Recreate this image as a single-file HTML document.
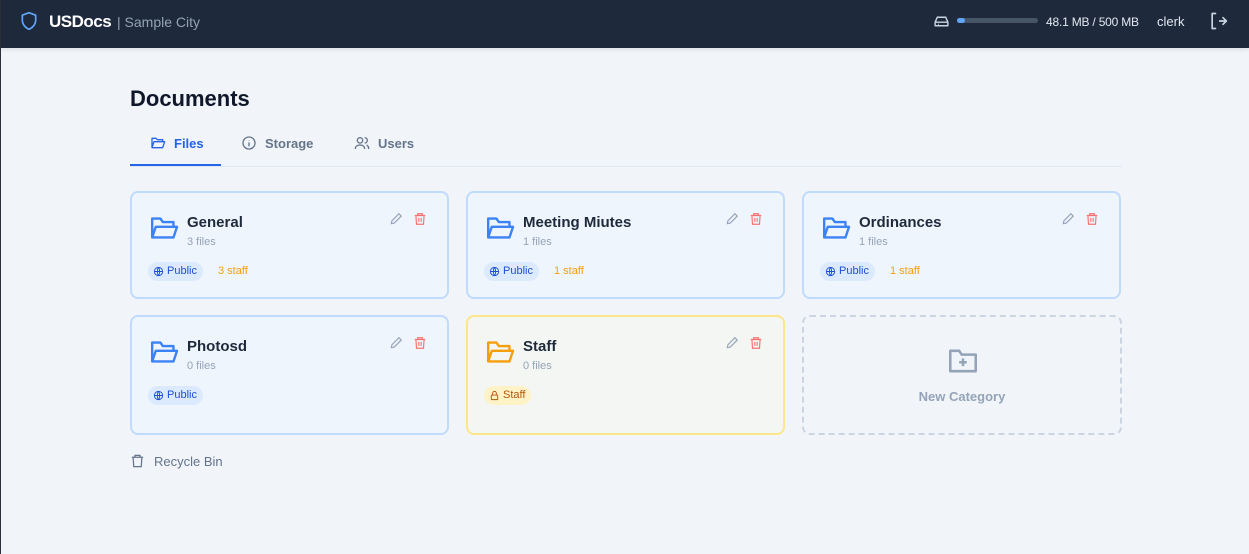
<!DOCTYPE html>
<html><head><meta charset="utf-8"><style>
*{box-sizing:border-box;margin:0;padding:0}
body{width:1249px;height:554px;background:#f1f5f9;font-family:"Liberation Sans",sans-serif;position:relative;overflow:hidden}
.hdr{position:absolute;left:0;top:0;width:1249px;height:48px;background:#1e293b;box-shadow:0 2px 4px rgba(0,0,0,.08)}
.a{position:absolute}
.card{position:absolute;width:319px;border:2px solid #bfdbfe;border-radius:8px;background:#eff5fc}
.card .t{position:absolute;left:55px;top:21px;font-size:15px;font-weight:bold;color:#1e293b}
.card .n{position:absolute;left:55px;top:43px;font-size:11px;color:#94a3b8}
.card .fi{position:absolute;left:17px;top:22px}
.card .ed{position:absolute;left:257px;top:19px}
.card .de{position:absolute;left:281px;top:19px}
.pub{position:absolute;left:16px;top:69px;height:19px;padding:0 6px 0 5px;border-radius:10px;background:#dbeafe;color:#1d4ed8;font-size:11px;line-height:19px;display:flex;align-items:center;gap:3px}
.st{position:absolute;left:86px;top:72px;font-size:11px;color:#f59e0b}
</style></head><body>
<div class="a" style="left:0;top:0;width:1px;height:554px;background:#2a2f3a;z-index:5"></div>
<div class="hdr">
<svg class="a" style="left:19px;top:10px" width="20" height="22" viewBox="0 0 24 24" fill="none" stroke="#60a5fa" stroke-width="2" stroke-linejoin="round"><path d="M12 2l8 3v6c0 5-3.5 9-8 11-4.5-2-8-6-8-11V5z"/></svg>
<div class="a" style="left:49px;top:12px;font-size:17px;font-weight:bold;color:#fff;letter-spacing:-.5px">USDocs</div>
<div class="a" style="left:117px;top:14px;font-size:14px;color:#94a3b8">| Sample City</div>
<svg class="a" style="left:933px;top:13px" width="17" height="17" viewBox="0 0 24 24" fill="none" stroke="#cbd5e1" stroke-width="2" stroke-linejoin="round"><path d="M3 13l3-7h12l3 7v5H3z M3 13h18"/><path d="M7 16h1"/></svg>
<div class="a" style="left:957px;top:18px;width:81px;height:5px;border-radius:3px;background:#475569"><div style="width:8px;height:5px;border-radius:3px;background:#60a5fa"></div></div>
<div class="a" style="left:1046px;top:15px;font-size:12px;color:#e2e8f0;letter-spacing:-.2px">48.1 MB / 500 MB</div>
<div class="a" style="left:1157px;top:14px;font-size:13px;color:#e2e8f0">clerk</div>
<svg class="a" style="left:1208px;top:11px" width="20" height="20" viewBox="0 0 24 24" fill="none" stroke="#cbd5e1" stroke-width="2" stroke-linecap="round" stroke-linejoin="round"><path d="M9 3H5v18h4M14 12h8M18 8l4 4-4 4"/></svg>
</div>
<div class="a" style="left:130px;top:86px;font-size:22px;font-weight:bold;color:#0f172a">Documents</div>
<div class="a" style="left:130px;top:166px;width:992px;height:1px;background:#e2e8f0"></div>
<div class="a" style="left:130px;top:164px;width:91px;height:2px;background:#2563eb"></div>
<svg class="a" style="left:150px;top:135px" width="16" height="16" viewBox="0 0 24 24" fill="none" stroke="#2563eb" stroke-width="2" stroke-linejoin="round"><path d="M3 19V5h6l2 2h8v3M3 19l3-9h16l-3 9z"/></svg>
<div class="a" style="left:174px;top:136px;font-size:13px;font-weight:bold;color:#2563eb">Files</div>
<svg class="a" style="left:241px;top:135px" width="16" height="16" viewBox="0 0 24 24" fill="none" stroke="#64748b" stroke-width="2"><circle cx="12" cy="12" r="9"/><path d="M12 11v6M12 7.5v.5"/></svg>
<div class="a" style="left:265px;top:136px;font-size:13px;font-weight:bold;color:#64748b">Storage</div>
<svg class="a" style="left:354px;top:135px" width="16" height="16" viewBox="0 0 24 24" fill="none" stroke="#64748b" stroke-width="2"><circle cx="9" cy="8" r="4"/><path d="M2 21c0-4 3-6 7-6s7 2 7 6M16 4a4 4 0 010 8M19 15c2 1 3 3 3 6"/></svg>
<div class="a" style="left:378px;top:136px;font-size:13px;font-weight:bold;color:#64748b">Users</div>

<div class="card" style="left:130px;top:191px;height:108px">
<svg class="fi" width="30" height="26" viewBox="0 0 24 22" fill="none" stroke="#3b82f6" stroke-width="2" stroke-linejoin="round"><path d="M2 19V3h7l2 3h9v4M2 19l3-9h18l-3 9z"/></svg>
<div class="t">General</div><div class="n">3 files</div>
<svg class="ed" width="14" height="14" viewBox="0 0 24 24" fill="none" stroke="#94a3b8" stroke-width="2"><path d="M4 20l1-5L17 3l4 4L9 19z"/></svg>
<svg class="de" width="14" height="14" viewBox="0 0 24 24" fill="none" stroke="#f87171" stroke-width="2"><path d="M3 6h18M8 6V3h8v3M5 6l1 15h12l1-15M10 10v7M14 10v7"/></svg>
<div class="pub"><svg width="11" height="11" viewBox="0 0 24 24" fill="none" stroke="#1d4ed8" stroke-width="2"><circle cx="12" cy="12" r="9"/><path d="M3 12h18M12 3c3 3 3 15 0 18M12 3c-3 3-3 15 0 18"/></svg>Public</div><div class="st">3 staff</div>
</div>
<div class="card" style="left:466px;top:191px;height:108px">
<svg class="fi" width="30" height="26" viewBox="0 0 24 22" fill="none" stroke="#3b82f6" stroke-width="2" stroke-linejoin="round"><path d="M2 19V3h7l2 3h9v4M2 19l3-9h18l-3 9z"/></svg>
<div class="t">Meeting Miutes</div><div class="n">1 files</div>
<svg class="ed" width="14" height="14" viewBox="0 0 24 24" fill="none" stroke="#94a3b8" stroke-width="2"><path d="M4 20l1-5L17 3l4 4L9 19z"/></svg>
<svg class="de" width="14" height="14" viewBox="0 0 24 24" fill="none" stroke="#f87171" stroke-width="2"><path d="M3 6h18M8 6V3h8v3M5 6l1 15h12l1-15M10 10v7M14 10v7"/></svg>
<div class="pub"><svg width="11" height="11" viewBox="0 0 24 24" fill="none" stroke="#1d4ed8" stroke-width="2"><circle cx="12" cy="12" r="9"/><path d="M3 12h18M12 3c3 3 3 15 0 18M12 3c-3 3-3 15 0 18"/></svg>Public</div><div class="st">1 staff</div>
</div>
<div class="card" style="left:802px;top:191px;height:108px">
<svg class="fi" width="30" height="26" viewBox="0 0 24 22" fill="none" stroke="#3b82f6" stroke-width="2" stroke-linejoin="round"><path d="M2 19V3h7l2 3h9v4M2 19l3-9h18l-3 9z"/></svg>
<div class="t">Ordinances</div><div class="n">1 files</div>
<svg class="ed" width="14" height="14" viewBox="0 0 24 24" fill="none" stroke="#94a3b8" stroke-width="2"><path d="M4 20l1-5L17 3l4 4L9 19z"/></svg>
<svg class="de" width="14" height="14" viewBox="0 0 24 24" fill="none" stroke="#f87171" stroke-width="2"><path d="M3 6h18M8 6V3h8v3M5 6l1 15h12l1-15M10 10v7M14 10v7"/></svg>
<div class="pub"><svg width="11" height="11" viewBox="0 0 24 24" fill="none" stroke="#1d4ed8" stroke-width="2"><circle cx="12" cy="12" r="9"/><path d="M3 12h18M12 3c3 3 3 15 0 18M12 3c-3 3-3 15 0 18"/></svg>Public</div><div class="st">1 staff</div>
</div>
<div class="card" style="left:130px;top:315px;height:120px">
<svg class="fi" width="30" height="26" viewBox="0 0 24 22" fill="none" stroke="#3b82f6" stroke-width="2" stroke-linejoin="round"><path d="M2 19V3h7l2 3h9v4M2 19l3-9h18l-3 9z"/></svg>
<div class="t">Photosd</div><div class="n">0 files</div>
<svg class="ed" width="14" height="14" viewBox="0 0 24 24" fill="none" stroke="#94a3b8" stroke-width="2"><path d="M4 20l1-5L17 3l4 4L9 19z"/></svg>
<svg class="de" width="14" height="14" viewBox="0 0 24 24" fill="none" stroke="#f87171" stroke-width="2"><path d="M3 6h18M8 6V3h8v3M5 6l1 15h12l1-15M10 10v7M14 10v7"/></svg>
<div class="pub"><svg width="11" height="11" viewBox="0 0 24 24" fill="none" stroke="#1d4ed8" stroke-width="2"><circle cx="12" cy="12" r="9"/><path d="M3 12h18M12 3c3 3 3 15 0 18M12 3c-3 3-3 15 0 18"/></svg>Public</div>
</div>
<div class="card" style="left:466px;top:315px;height:120px;border-color:#fde68a;background:#f4f6f3">
<svg class="fi" width="30" height="26" viewBox="0 0 24 22" fill="none" stroke="#f59e0b" stroke-width="2" stroke-linejoin="round"><path d="M2 19V3h7l2 3h9v4M2 19l3-9h18l-3 9z"/></svg>
<div class="t">Staff</div><div class="n">0 files</div>
<svg class="ed" width="14" height="14" viewBox="0 0 24 24" fill="none" stroke="#94a3b8" stroke-width="2"><path d="M4 20l1-5L17 3l4 4L9 19z"/></svg>
<svg class="de" width="14" height="14" viewBox="0 0 24 24" fill="none" stroke="#f87171" stroke-width="2"><path d="M3 6h18M8 6V3h8v3M5 6l1 15h12l1-15M10 10v7M14 10v7"/></svg>
<div class="pub" style="background:#fef3c7;color:#b45309"><svg width="11" height="11" viewBox="0 0 24 24" fill="none" stroke="#b45309" stroke-width="2"><rect x="5" y="11" width="14" height="10" rx="1"/><path d="M8 11V7a4 4 0 018 0v4"/></svg>Staff</div>
</div>
<div class="a" style="left:802px;top:315px;width:320px;height:120px;border:2px dashed #cbd5e1;border-radius:8px">
<svg class="a" style="left:143px;top:30px" width="32" height="28" viewBox="0 0 24 22" fill="none" stroke="#94a3b8" stroke-width="2" stroke-linejoin="round"><path d="M2 19V3h7l2 3h11v13z M12 9v6M9 12h6"/></svg>
<div class="a" style="left:0;width:316px;top:72px;text-align:center;font-size:13px;font-weight:bold;color:#94a3b8">New Category</div>
</div>
<svg class="a" style="left:130px;top:453px" width="15" height="16" viewBox="0 0 24 24" fill="none" stroke="#64748b" stroke-width="2"><path d="M3 6h18M8 6V3h8v3M5 6l1 15h12l1-15"/></svg>
<div class="a" style="left:154px;top:454px;font-size:13px;color:#64748b">Recycle Bin</div>
</body></html>
